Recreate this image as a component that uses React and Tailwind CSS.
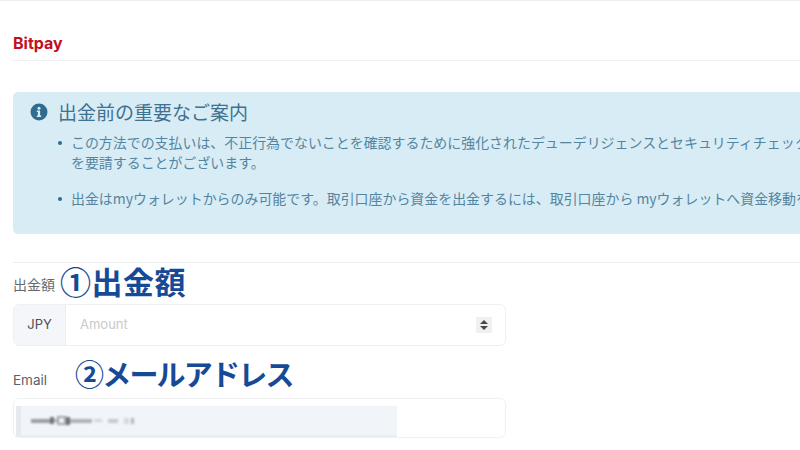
export default function App() {
  const cjk = { fontFamily: '"Noto Sans CJK JP", sans-serif' };
  return (
    <div className="relative h-[450px] w-[800px] overflow-hidden bg-white font-['Inter','Noto_Sans_CJK_JP',sans-serif]">
      <div className="h-px bg-[#eeeeee]" />
      <div className="pl-[13px]">
        <div className="flex h-[60px] w-[787px] items-end border-b border-[#f0f1f3] pb-[7px]">
          <span className="font-['Inter',sans-serif] text-[16px] font-bold leading-[20px] text-[#c2101f]">Bitpay</span>
        </div>

        <div className="mt-[31px] h-[142px] w-[900px] rounded-[5px] bg-[#d8ecf6] pl-[17px] pt-[9px] text-[#41738f]">
          <div className="flex items-center gap-[10px]">
            <svg width="18" height="18" viewBox="0 0 18 18">
              <circle cx="9" cy="9" r="8.5" fill="#2f6c8f" />
              <circle cx="9" cy="5.2" r="1.5" fill="#d8ecf6" />
              <path d="M6.8 7.6h3.3v5h1.1v1.4H6.8v-1.4h1.1V9H6.8z" fill="#d8ecf6" />
            </svg>
            <h2 className="text-[19px] font-normal leading-[22px] text-[#3f7290]" style={cjk}>出金前の重要なご案内</h2>
          </div>
          <ul className="mt-[9px] w-[900px] list-none pl-[41px] text-[13.95px] leading-[20px] text-[#55859e]" style={cjk}>
            <li className="relative mb-[16px]">
              <span className="absolute left-[-13px] top-[9px] h-[4px] w-[4px] rounded-full bg-[#2f6c8f]" />
              <span className="block whitespace-nowrap">この方法での支払いは、不正行為でないことを確認するために強化されたデューデリジェンスとセキュリティチェック</span>
              <span className="block">を要請することがございます。</span>
            </li>
            <li className="relative">
              <span className="absolute left-[-13px] top-[9px] h-[4px] w-[4px] rounded-full bg-[#2f6c8f]" />
              <span className="block whitespace-nowrap">出金はmyウォレットからのみ可能です。取引口座から資金を出金するには、取引口座から myウォレットへ資金移動を</span>
            </li>
          </ul>
        </div>

        <div className="mt-[28px] w-[787px] border-t border-[#eceef0]" />

        <label className="mt-[12px] block text-[14px] leading-[18px] text-[#666a70]" style={cjk}>出金額</label>
        <div className="mt-[11px] flex h-[42px] w-[493px] overflow-hidden rounded-[6px] border border-[#eff0f3]">
          <div className="flex w-[52px] items-center justify-center border-r border-[#eceef2] bg-[#f4f6f9] text-[13px] text-[#4d5057]">JPY</div>
          <div className="flex flex-1 items-center justify-between pl-[14px] pr-[13px]">
            <span className="text-[13px] text-[#c9cacc]">Amount</span>
            <div className="flex h-[16px] w-[16px] flex-col items-center justify-center gap-[2px] bg-[#f0f0f0]">
              <span className="h-0 w-0 border-x-[4px] border-b-[4px] border-x-transparent border-b-[#4a4a4a]" />
              <span className="h-0 w-0 border-x-[4px] border-t-[4px] border-x-transparent border-t-[#4a4a4a]" />
            </div>
          </div>
        </div>

        <label className="mt-[25px] block text-[13.5px] leading-[18px] text-[#5d6066]">Email</label>
        <div className="mt-[9px] flex h-[40px] w-[493px] rounded-[6px] border border-[#f0f1f3] pt-[7px]">
          <div className="ml-[2px] flex h-[31px] w-[381px] items-center border-b-2 border-l-[5px] border-b-[#e9ecf1] border-l-[#e6e9ee] bg-[#f1f4f8] pl-[10px]">
            <div className="flex items-center blur-[1px]">
              <span className="h-[4px] w-[19px] bg-[#9a9da6]" />
              <span className="h-[7px] w-[4px] bg-[#707480]" />
              <span className="h-[3px] w-[3px] bg-[#b0b4bb]" />
              <span className="h-[9px] w-[9px] border-2 border-[#a2a6ae]" />
              <span className="h-[8px] w-[4px] bg-[#70737d]" />
              <span className="h-[4px] w-[22px] bg-[#aeb1b9]" />
              <span className="ml-[2px] h-[3px] w-[8px] bg-[#d3d6dc]" />
              <span className="ml-[6px] h-[4px] w-[10px] bg-[#c7cad1]" />
              <span className="ml-[6px] h-[6px] w-[5px] bg-[#d5d8de]" />
              <span className="ml-[2px] h-[6px] w-[3px] bg-[#b0b5c3]" />
            </div>
          </div>
        </div>
      </div>

      <div className="absolute left-[60px] top-[259px] whitespace-nowrap text-[31px] font-bold leading-[44px] tracking-[0.5px] text-[#174a96]" style={cjk}>①出金額</div>
      <div className="absolute left-[75px] top-[351px] whitespace-nowrap text-[29px] font-bold leading-[44px] tracking-[-1.8px] text-[#174a96]" style={cjk}>②メールアドレス</div>
    </div>
  );
}
